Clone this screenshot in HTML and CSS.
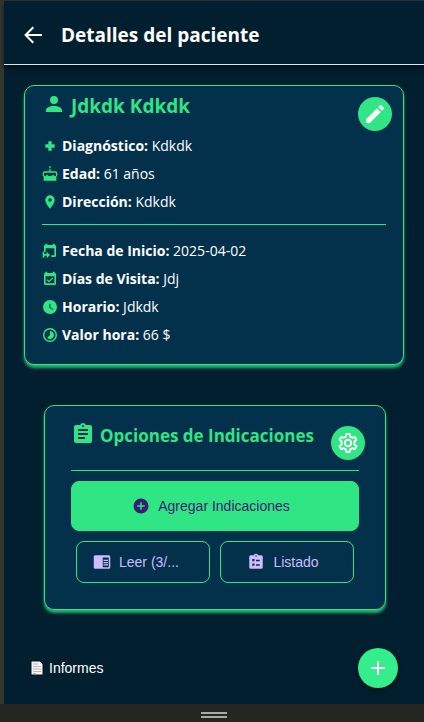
FILE: index.html
```html
<!DOCTYPE html>
<html lang="es">
<head>
<meta charset="utf-8">
<meta name="viewport" content="width=device-width, initial-scale=1">
<title>Detalles del paciente</title>
<link rel="stylesheet" href="styles.css">
</head>
<body>
<div class="app">
  <header class="topbar">
    <button class="back" type="button" aria-label="Volver">
      <svg class="i24" viewBox="0 0 24 24"><path d="M21 11v2H7l6 6-1.420 1.420L3.160 12l8.420-8.420L13 5 7 11z"/></svg>
    </button>
    <h1>Detalles del paciente</h1>
  </header>
  <main>
    <section class="card patient">
      <h2><svg class="i24" viewBox="0 0 24 24"><path d="M12 4a4 4 0 1 1 0 8 4 4 0 0 1 0-8m0 10c4.420 0 8 1.790 8 4v2H4v-2c0-2.210 3.580-4 8-4"/></svg>Jdkdk Kdkdk</h2>
      <button class="round" type="button" aria-label="Editar"><svg class="i24" viewBox="0 0 24 24"><path d="M20.710 7.040c.39-.39.39-1.040 0-1.410l-2.340-2.340c-.37-.39-1.020-.39-1.410 0l-1.840 1.830 3.750 3.750M3 17.250V21h3.750L17.810 9.930l-3.750-3.750z"/></svg></button>
      <ul class="facts">
        <li><svg class="i16" viewBox="0 0 24 24"><path d="M9.500 5h5v4.500H19v5h-4.500V19h-5v-4.500H5v-5h4.500z"/></svg><p><b>Diagnóstico:</b> Kdkdk</p></li>
        <li><svg class="i16" viewBox="0 0 24 24"><path d="M11 0h2v3h-2zM11 4h2v4h7a3 3 0 0 1 3 3v2.500a3.500 3.500 0 0 1-1.500 2.800V22h-19v-5.700A3.500 3.500 0 0 1 1 13.500V11a3 3 0 0 1 3-3h7zM4 10a1 1 0 0 0-1 1v2.500a1.700 1.700 0 0 0 3.400 0h2.200a1.700 1.700 0 0 0 2.300 1.500h2.200a1.700 1.700 0 0 0 2.300-1.500h2.200a1.700 1.700 0 0 0 3.400 0V11a1 1 0 0 0-1-1z" fill-rule="evenodd"/></svg><p><b>Edad:</b> 61 años</p></li>
        <li><svg class="i16" viewBox="0 0 24 24"><path d="M12 11.500A2.500 2.500 0 1 1 12 6.500a2.500 2.500 0 0 1 0 5M12 2a7 7 0 0 0-7 7c0 5.250 7 13 7 13s7-7.750 7-13a7 7 0 0 0-7-7"/></svg><p><b>Dirección:</b> Kdkdk</p></li>
      </ul>
      <hr>
      <ul class="facts">
        <li><svg class="i16" viewBox="0 0 24 24"><path d="M5 1h3v2h8V1h3v2a2 2 0 0 1 2 2v14a2 2 0 0 1-2 2h-5v-2.500h4.500V8H5.500v5H3V5a2 2 0 0 1 2-2zM1 13h2.500v3.500H7V13l5 5-5 5v-4H3.500v3H1z"/></svg><p><b>Fecha de Inicio:</b> 2025-04-02</p></li>
        <li><svg class="i16" viewBox="0 0 24 24"><path d="M19 3V1h-3v2H8V1H5v2a2 2 0 0 0-2 2v14a2 2 0 0 0 2 2h14a2 2 0 0 0 2-2V5a2 2 0 0 0-2-2m-.500 15.500h-13V8h13zm-1.500-7.500L15.600 9.600l-5 5-2.200-2.200L7 13.800l3.600 3.600z"/></svg><p><b>Días de Visita:</b> Jdj</p></li>
        <li><svg class="i16" viewBox="0 0 24 24"><path d="M12 1.500a10.500 10.500 0 1 0 0 21 10.500 10.500 0 0 0 0-21m4.200 14.700L11 13V7h1.500v5.200l4.500 2.700z"/></svg><p><b>Horario:</b> Jdkdk</p></li>
        <li><svg class="i16" viewBox="0 0 24 24"><path d="M12 1.500a10.500 10.500 0 1 0 0 21 10.500 10.500 0 0 0 0-21m0 18.800a8.300 8.300 0 1 1 0-16.600 8.300 8.300 0 0 1 0 16.600M12 6v6l-4.240 4.240A6 6 0 1 0 12 6"/></svg><p><b>Valor hora:</b> 66 $</p></li>
      </ul>
    </section>

    <section class="card options">
      <h2><svg class="i24" viewBox="0 0 24 24"><path d="M19 3h-4.180a3 3 0 0 0-5.640 0H5a2 2 0 0 0-2 2v14a2 2 0 0 0 2 2h14a2 2 0 0 0 2-2V5a2 2 0 0 0-2-2m-7 0a1 1 0 1 1 0 2 1 1 0 0 1 0-2m2 14H7v-2h7zm3-4H7v-2h10zm0-4H7V7h10z"/></svg>Opciones de Indicaciones</h2>
      <button class="round" type="button" aria-label="Configurar"><svg class="i24 line" viewBox="0 0 24 24"><circle cx="12" cy="12" r="3.200"/><path d="M10.300 3h3.400l.5 2.600 2 1.150 2.500-.9 1.700 2.950-2 1.700v3l2 1.700-1.700 2.950-2.500-.9-2 1.150-.5 2.600h-3.400l-.5-2.600-2-1.150-2.500.9-1.700-2.950 2-1.700v-3l-2-1.700 1.700-2.950 2.500.9 2-1.150z"/></svg></button>
      <hr>
      <button class="action primary" type="button"><svg class="i18" viewBox="0 0 24 24"><path d="M12 2a10 10 0 1 0 0 20 10 10 0 0 0 0-20m5 11h-4v4h-2v-4H7v-2h4V7h2v4h4z"/></svg><span>Agregar Indicaciones</span></button>
      <div class="pair">
        <button class="action start" type="button"><svg class="i18" viewBox="0 0 24 24"><path d="M3 3h18a2 2 0 0 1 2 2v14a2 2 0 0 1-2 2H3a2 2 0 0 1-2-2V5a2 2 0 0 1 2-2m10 3v13h8V6zm1 3h6v1.500h-6zm0 3h6v1.500h-6zm0 3h6v1.500h-6z" fill-rule="evenodd"/></svg><span>Leer (3/...</span></button>
        <button class="action" type="button"><svg class="i18" viewBox="0 0 24 24"><path d="M19 3h-4.180a3 3 0 0 0-5.640 0H5a2 2 0 0 0-2 2v14a2 2 0 0 0 2 2h14a2 2 0 0 0 2-2V5a2 2 0 0 0-2-2m-7 0a1 1 0 1 1 0 2 1 1 0 0 1 0-2M7 8h3v3H7zm5 1h5v2h-5zm-5 5h3v3H7zm5 1h5v2h-5z" fill-rule="evenodd"/></svg><span>Listado</span></button>
      </div>
    </section>
  </main>
  <footer class="bottom">
    <a class="reports" href="#informes"><svg class="doc" viewBox="0 0 14 16"><path d="M1 1h9l3 3v11H1z" fill="#f4f4f4" stroke="#111" stroke-width="1"/><path d="M3 4h5M3 6.500h8M3 9h8M3 11.500h8M3 13.500h3" stroke="#bbb" fill="none"/></svg>Informes</a>
    <button class="fab" type="button" aria-label="Agregar"><svg class="i24" viewBox="0 0 24 24"><path d="M11 5h2v6h6v2h-6v6h-2v-6H5v-2h6z"/></svg></button>
  </footer>
</div>
<div class="grip"><span></span></div>
</body>
</html>
```
FILE: styles.css
```css
* { box-sizing: border-box; }

body {
  margin: 0;
  min-height: 100vh;
  display: flex;
  flex-direction: column;
  background: #021f30;
  color: #fff;
  font: 14px/20px "Open Sans", "Noto Sans", sans-serif;
  border-top: 1px solid #2c302d;
}

h1, h2, p, ul { margin: 0; padding: 0; }
ul { list-style: none; }
svg { flex: none; fill: currentColor; display: block; }
button { font: inherit; color: inherit; background: none; border: 0; padding: 0; cursor: pointer; }

.i24 { width: 24px; height: 24px; }
.i18 { width: 18px; height: 18px; }
.i16 { width: 16px; height: 16px; }
.line { fill: none; stroke: currentColor; stroke-width: 2; stroke-linejoin: round; }

.app {
  flex: 1;
  display: flex;
  flex-direction: column;
  border-left: 4px solid #343833;
}

.topbar {
  display: flex;
  align-items: center;
  gap: 16px;
  height: 64px;
  padding: 4px 17px 0;
  border-bottom: 1px solid #dfe3e5;
  box-shadow: 0 2px 5px rgba(0, 0, 0, .6);
}
.topbar h1 { font-size: 19px; line-height: 28px; font-weight: 700; }

main { padding: 20px 20px 0; }

.card {
  position: relative;
  background: #03304b;
  border: 1px solid #30e584;
  border-radius: 10px;
  box-shadow: 0 3px 3px rgba(48, 229, 132, .75);
}
.card h2 {
  display: flex;
  gap: 5px;
  color: #30e584;
  line-height: 28px;
  white-space: nowrap;
}
.card hr {
  width: 100%;
  height: 1px;
  border: 0;
  background: #30e584;
}

.round {
  position: absolute;
  display: grid;
  place-items: center;
  width: 34px;
  height: 34px;
  border-radius: 50%;
  background: #30e584;
}

.patient { padding: 6px 17px 15px; }
.patient h2 { font-size: 19px; }
.patient .round { top: 11px; right: 11px; }
.patient hr { margin: 8px 0 12px; }
.patient .facts:first-of-type { margin-top: 12px; }

.facts { color: #30e584; }
.facts li { display: flex; align-items: center; gap: 4px; height: 28px; font-size: 14px; }
.facts p { color: #fff; }

.options { margin: 40px 18px 0 20px; padding: 16px 26px 26px; }
.options h2 { font-size: 17px; }
.options .round { top: 20px; right: 20px; }
.options hr { margin: 20px 0 10px; }

.action {
  display: flex;
  align-items: center;
  justify-content: center;
  gap: 8px;
  min-width: 0;
  height: 42px;
  padding: 0 16px 0 8px;
  border: 1px solid #30e584;
  border-radius: 8px;
  color: #d0bcff;
  font: 14px/20px "Liberation Sans", Arial, sans-serif;
}
.start { justify-content: flex-start; padding-left: 16px; }
.primary {
  width: 100%;
  height: 50px;
  background: #30e584;
  color: #381e72;
}
.pair {
  display: grid;
  grid-template-columns: 1fr 1fr;
  gap: 10px;
  padding: 10px 5px 0;
}

.bottom {
  display: flex;
  justify-content: space-between;
  align-items: center;
  margin-top: auto;
  padding: 0 26px 16px;
}
.reports {
  display: flex;
  align-items: center;
  gap: 5px;
  color: #fff;
  text-decoration: none;
  font: 14px/20px "Liberation Sans", Arial, sans-serif;
}
.doc { width: 14px; height: 16px; }
.fab {
  display: grid;
  place-items: center;
  width: 40px;
  height: 40px;
  border-radius: 50%;
  background: #33ee8a;
  box-shadow: 0 2px 5px rgba(0, 0, 0, .5);
}

.grip {
  display: grid;
  place-items: center;
  height: 18px;
  padding-top: 4px;
  padding-left: 4px;
  background: #242622;
}
.grip span { width: 26px; height: 6px; border: solid #a9aaa8; border-width: 2px 0; }
```
